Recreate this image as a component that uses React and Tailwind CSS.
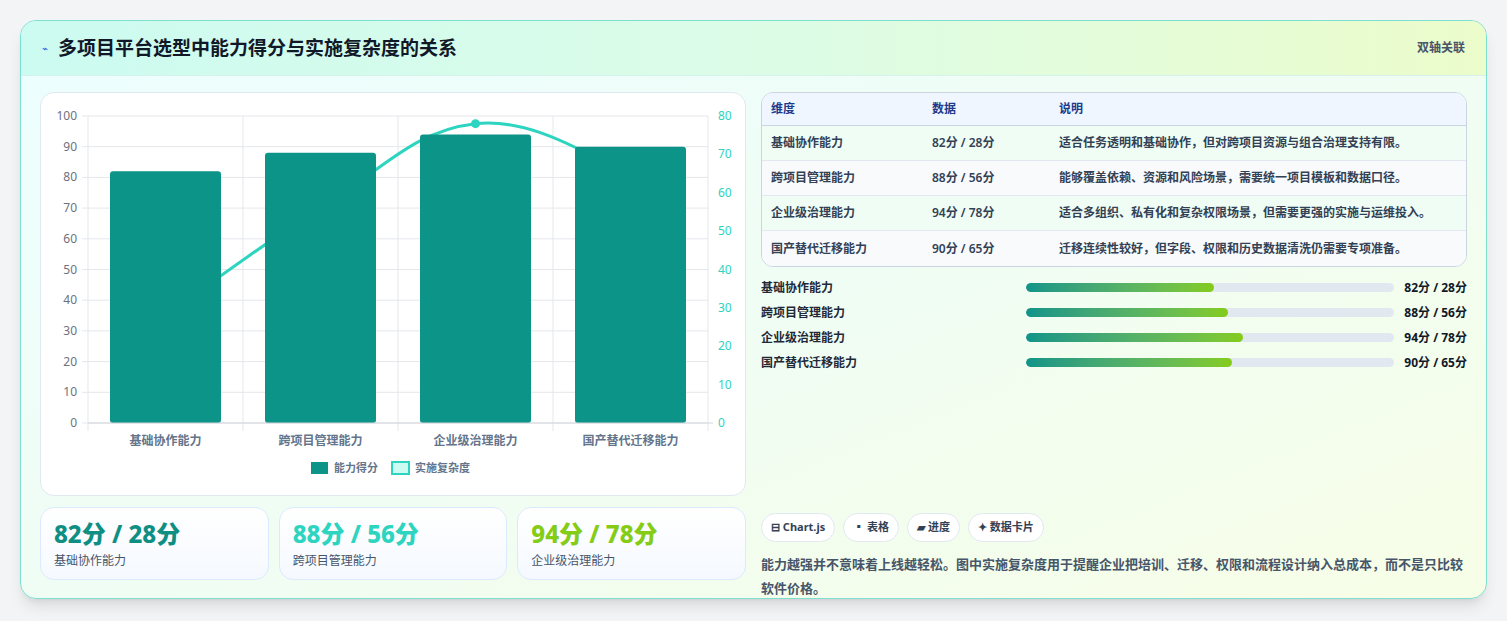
import React from "react";

const cats = ["基础协作能力", "跨项目管理能力", "企业级治理能力", "国产替代迁移能力"];
const scores = [82, 88, 94, 90];
const comp = [28, 56, 78, 65];
const vals = ["82分 / 28分", "88分 / 56分", "94分 / 78分", "90分 / 65分"];
const desc = [
  "适合任务透明和基础协作，但对跨项目资源与组合治理支持有限。",
  "能够覆盖依赖、资源和风险场景，需要统一项目模板和数据口径。",
  "适合多组织、私有化和复杂权限场景，但需要更强的实施与运维投入。",
  "迁移连续性较好，但字段、权限和历史数据清洗仍需要专项准备。",
];
const fills = [51, 55, 59, 56];

function Chart() {
  const x0 = 47, x1 = 667, y0 = 23, y1 = 330;
  const h = y1 - y0;
  const cw = (x1 - x0) / 4;
  const pts = comp.map((v, i) => [x0 + cw * (i + 0.5), y1 - (v / 80) * h]);
  let d = `M${pts[0][0]},${pts[0][1]}`;
  for (let i = 0; i < pts.length - 1; i++) {
    const p0 = pts[i - 1] || pts[i], p1 = pts[i], p2 = pts[i + 1], p3 = pts[i + 2] || p2;
    const t = 0.4;
    const c1 = [p1[0] + (p2[0] - p0[0]) * t / 2, p1[1] + (p2[1] - p0[1]) * t / 2];
    const c2 = [p2[0] - (p3[0] - p1[0]) * t / 2, p2[1] - (p3[1] - p1[1]) * t / 2];
    d += ` C${c1[0]},${c1[1]} ${c2[0]},${c2[1]} ${p2[0]},${p2[1]}`;
  }
  return (
    <svg width="706" height="404" style={{ fontFamily: "'Noto Sans','Noto Sans CJK SC',sans-serif" }}>
      {Array.from({ length: 11 }).map((_, i) => {
        const y = y1 - (i / 10) * h;
        return (
          <g key={i}>
            <line x1={x0 - 6} x2={x1} y1={y} y2={y} stroke="#e5e7eb" />
            <text x={x0 - 11} y={y + 4} textAnchor="end" fontSize="12" fill="#6b7280">{i * 10}</text>
          </g>
        );
      })}
      {Array.from({ length: 9 }).map((_, i) => {
        const y = y1 - (i / 8) * h;
        return <text key={i} x={x1 + 10} y={y + 4} fontSize="12" fill="#2dd4bf">{i * 10}</text>;
      })}
      {[0, 1, 2, 3, 4].map((i) => (
        <line key={i} x1={x0 + cw * i} x2={x0 + cw * i} y1={y0} y2={y1 + 8} stroke="#e5e7eb" />
      ))}
      <line x1={x1} x2={x1 + 5} y1={y1} y2={y1} stroke="#d1d5db" />
      <path d={d} fill="none" stroke="#2dd4bf" strokeWidth="3" />
      <circle cx={pts[2][0]} cy={pts[2][1]} r="4.5" fill="#2dd4bf" />
      {scores.map((s, i) => {
        const bx = x0 + cw * i + 22, by = y1 - (s / 100) * h;
        return <rect key={i} x={bx} y={by} width={111} height={y1 - by} rx="3" fill="#0d9488" />;
      })}
      <line x1={x0} x2={x1} y1={y1} y2={y1} stroke="#d1d5db" />
      {cats.map((c, i) => (
        <text key={c} x={x0 + cw * (i + 0.5)} y={352} textAnchor="middle" fontSize="12" fontWeight="600" fill="#64748b">{c}</text>
      ))}
      <rect x="270" y="369" width="17" height="12" fill="#0d9488" />
      <text x="293" y="379" fontSize="11" fontWeight="600" fill="#64748b">能力得分</text>
      <rect x="351" y="369" width="17" height="12" fill="#ccfbf1" stroke="#2dd4bf" strokeWidth="2" />
      <text x="374" y="379" fontSize="11" fontWeight="600" fill="#64748b">实施复杂度</text>
    </svg>
  );
}

export default function App() {
  return (
    <div className="w-[1507px] h-[621px] bg-[#f3f4f6] pt-[20px] pl-[20px]" style={{ fontFamily: "'Noto Sans','Noto Sans CJK SC',sans-serif" }}>
      <div className="w-[1467px] h-[579px] rounded-[16px] border border-[#7ddfcf] overflow-hidden bg-gradient-to-br from-[#ecfeff] via-[#f0fdf4] to-[#f7fee7] shadow-lg">
        <div className="h-[55px] flex items-center justify-between px-[21px] border-b border-[#d5f3ea] bg-gradient-to-r from-[#ccfbf1] via-[#dcfce7] to-[#ecfccb]">
          <div className="flex items-center gap-[10px]">
            <span className="text-[10px] text-[#2563eb]">⌁</span>
            <span className="text-[19px] font-bold text-[#111827]">多项目平台选型中能力得分与实施复杂度的关系</span>
          </div>
          <span className="text-[12px] font-semibold text-[#475569]">双轴关联</span>
        </div>
        <div className="flex gap-[15px] px-[19px] pt-[16px]">
          <div className="w-[706px] flex flex-col gap-[11px]">
            <div className="h-[404px] rounded-[14px] bg-white border border-[#e2e8f0]">
              <Chart />
            </div>
            <div className="grid grid-cols-3 gap-[10px]">
              {[0, 1, 2].map((i) => (
                <div key={i} className="h-[73px] rounded-[14px] border border-[#dbeafe] bg-gradient-to-b from-white to-[#f5f9ff] px-[13px] pt-[10px]">
                  <div className={`text-[24px] leading-[32px] font-extrabold ${["text-[#0f8f84]", "text-[#2dd4bf]", "text-[#84cc16]"][i]}`}>{vals[i]}</div>
                  <div className="text-[12px] text-[#475569] mt-[2px]">{cats[i]}</div>
                </div>
              ))}
            </div>
          </div>
          <div className="w-[706px] flex flex-col">
            <div className="rounded-[12px] border border-[#cbd5e1] overflow-hidden bg-white">
              <div className="h-[33px] flex items-center bg-[#eff6ff] border-b border-[#cbd5e1] text-[12px] font-bold text-[#1e3a8a]">
                <div className="w-[170px] pl-[9px]">维度</div>
                <div className="w-[127px]">数据</div>
                <div>说明</div>
              </div>
              {cats.map((c, i) => (
                <div key={c} className={`h-[35px] flex items-center text-[12px] font-semibold text-[#334155] ${i < 3 ? "border-b border-[#e2e8f0]" : ""} ${i % 2 ? "bg-[#f8fafc]" : "bg-[#f0fdf4]"}`}>
                  <div className="w-[170px] pl-[9px]">{c}</div>
                  <div className="w-[127px]">{vals[i]}</div>
                  <div>{desc[i]}</div>
                </div>
              ))}
            </div>
            <div className="flex flex-col gap-[10px] mt-[13px]">
              {cats.map((c, i) => (
                <div key={c} className="h-[15px] flex items-center text-[12px] font-semibold text-[#1f2937]">
                  <div className="w-[265px]">{c}</div>
                  <div className="w-[368px] h-[9px] rounded-full bg-[#e2e8f0] overflow-hidden">
                    <div className="h-full rounded-full bg-gradient-to-r from-[#0d9488] to-[#84cc16]" style={{ width: fills[i] + "%" }} />
                  </div>
                  <div className="flex-1 text-right font-bold text-[#111827]">{vals[i]}</div>
                </div>
              ))}
            </div>
            <div className="flex gap-[8px] mt-[143px]">
              {["⊟ Chart.js", "▪ 表格", "▰ 进度", "✦ 数据卡片"].map((t) => (
                <span key={t} className="h-[29px] px-[9px] flex items-center rounded-full bg-white border border-[#e2e8f0] text-[11px] font-bold text-[#334155]">{t}</span>
              ))}
            </div>
            <p className="mt-[10px] text-[13px] leading-[24px] font-semibold text-[#475569]">
              能力越强并不意味着上线越轻松。图中实施复杂度用于提醒企业把培训、迁移、权限和流程设计纳入总成本，而不是只比较软件价格。
            </p>
          </div>
        </div>
      </div>
    </div>
  );
}
